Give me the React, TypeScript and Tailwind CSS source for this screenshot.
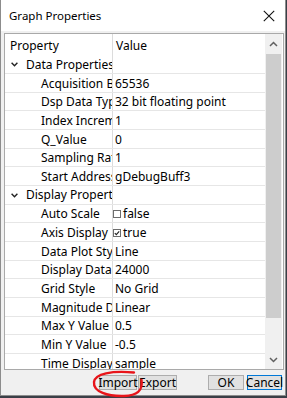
import React from "react";

type Row =
  | { kind: "cat"; name: string }
  | { kind: "prop"; name: string; value: string; check?: boolean };

const rows: Row[] = [
  { kind: "cat", name: "Data Properties" },
  { kind: "prop", name: "Acquisition Buffer Size", value: "65536" },
  { kind: "prop", name: "Dsp Data Type", value: "32 bit floating point" },
  { kind: "prop", name: "Index Increment", value: "1" },
  { kind: "prop", name: "Q_Value", value: "0" },
  { kind: "prop", name: "Sampling Rate", value: "1" },
  { kind: "prop", name: "Start Address", value: "gDebugBuff3" },
  { kind: "cat", name: "Display Properties" },
  { kind: "prop", name: "Auto Scale", value: "false", check: false },
  { kind: "prop", name: "Axis Display", value: "true", check: true },
  { kind: "prop", name: "Data Plot Style", value: "Line" },
  { kind: "prop", name: "Display Data Size", value: "24000" },
  { kind: "prop", name: "Grid Style", value: "No Grid" },
  { kind: "prop", name: "Magnitude Display", value: "Linear" },
  { kind: "prop", name: "Max Y Value", value: "0.5" },
  { kind: "prop", name: "Min Y Value", value: "-0.5" },
  { kind: "prop", name: "Time Display Unit", value: "sample" },
];

function CheckBox({ checked }: { checked: boolean }) {
  return (
    <svg width="8" height="8" viewBox="0 0 8 8" className="ml-[-2px] shrink-0">
      <rect x="0.5" y="0.5" width="7" height="7" fill="#fff" stroke="#6d6d6d" strokeWidth="1" />
      {checked && <path d="M1.8 4.2 L3.3 5.7 L6.2 2.3" fill="none" stroke="#222" strokeWidth="1.1" />}
    </svg>
  );
}

function GridRow({ row }: { row: Row }) {
  if (row.kind === "cat") {
    return (
      <div className="flex h-[18.667px] border-b border-[#e6e6e6] shrink-0">
        <div className="w-[108px] shrink-0 border-r border-[#dcdcdc] flex items-center overflow-hidden whitespace-nowrap pl-[6px] pt-[1px]">
          <svg width="7" height="5" viewBox="0 0 7 5" className="shrink-0">
            <path d="M0.6 0.8 L3.5 3.8 L6.4 0.8" fill="none" stroke="#222" strokeWidth="1.4" />
          </svg>
          <span className="ml-[8px]">{row.name}</span>
        </div>
        <div className="flex-1" />
      </div>
    );
  }
  return (
    <div className="flex h-[18.667px] border-b border-[#e6e6e6] shrink-0">
      <div className="w-[108px] shrink-0 border-r border-[#dcdcdc] flex items-center overflow-hidden whitespace-nowrap pl-[36px] pt-[2px]">
        <span>{row.name}</span>
      </div>
      <div className="flex-1 flex items-center overflow-hidden whitespace-nowrap pl-[2px] pt-[2px]">
        {row.check !== undefined && <CheckBox checked={row.check} />}
        <span className={row.check !== undefined ? "ml-[2px]" : ""}>{row.value}</span>
      </div>
    </div>
  );
}

export default function App() {
  return (
    <div
      className="w-[287px] h-[398px] bg-[#3a3f47] overflow-hidden text-[12px] text-black relative"
      style={{ fontFamily: '"Noto Sans", "Open Sans", sans-serif' }}
    >
      <div className="w-[286px] h-[396px] flex flex-col border-l border-r border-b border-[#8c8c8c] bg-[#f0f0f0]">
        {/* Title bar */}
        <div className="h-[31px] bg-white flex items-center justify-between pl-[8px] pr-[10px] shrink-0">
          <span className="text-[11.5px] leading-none pt-[1px]">Graph Properties</span>
          <svg width="12" height="12" viewBox="0 0 12 12">
            <path d="M0.8 0.8 L11.2 11.2 M11.2 0.8 L0.8 11.2" stroke="#111" strokeWidth="1.1" />
          </svg>
        </div>
        {/* Property grid */}
        <div className="mt-[2px] ml-[3px] w-[280px] h-[337px] border border-[#a9a9a9] bg-white flex overflow-hidden shrink-0">
          <div className="flex-1 flex flex-col overflow-hidden">
            <div className="flex h-[21.333px] shrink-0">
              <div className="w-[108px] shrink-0 border-r border-[#dcdcdc] pl-[5px] flex items-center pt-[3px]">
                Property
              </div>
              <div className="flex-1 pl-[3px] flex items-center pt-[3px]">Value</div>
            </div>
            {rows.map((r, i) => (
              <GridRow key={i} row={r} />
            ))}
          </div>
          {/* Scrollbar */}
          <div className="w-[17px] mr-[1px] bg-[#f0f0f0] flex flex-col shrink-0">
            <div className="h-[20px] flex items-center justify-center shrink-0">
              <svg width="9" height="6" viewBox="0 0 9 6">
                <path d="M1 5 L4.5 1.5 L8 5" fill="none" stroke="#606060" strokeWidth="1.5" />
              </svg>
            </div>
            <div className="h-[264px] mx-[1px] bg-[#cdcdcd] shrink-0" />
            <div className="flex-1" />
            <div className="h-[18px] flex items-center justify-center shrink-0">
              <svg width="9" height="6" viewBox="0 0 9 6">
                <path d="M1 1 L4.5 4.5 L8 1" fill="none" stroke="#606060" strokeWidth="1.5" />
              </svg>
            </div>
          </div>
        </div>
        {/* Footer buttons */}
        <div className="flex items-start mt-[5px] pl-[98px] shrink-0">
          <div className="w-[38px] h-[15px] bg-[#e1e1e1] border border-[#adadad] flex items-center justify-center leading-none">
            Import
          </div>
          <div className="ml-[1px] w-[39px] h-[15px] bg-[#e1e1e1] border border-[#adadad] flex items-center justify-center leading-none">
            Export
          </div>
          <div className="ml-[31px] w-[36px] h-[15px] bg-[#e1e1e1] border border-[#adadad] flex items-center justify-center leading-none">
            OK
          </div>
          <div className="ml-[3px] w-[35px] h-[15px] bg-[#e1e1e1] border border-[#0078d7] flex items-center justify-center leading-none">
            Cancel
          </div>
        </div>
      </div>
      {/* Red annotation circle */}
      <svg className="absolute left-0 top-0 pointer-events-none" width="287" height="398" viewBox="0 0 287 398">
        <path
          d="M134 372.5 C112 370.5 95 373.5 94 382 C93 392 108 396.5 124 396 C137 395.5 143 391 141.5 380"
          fill="none"
          stroke="#e8141a"
          strokeWidth="2.4"
          strokeLinecap="round"
        />
      </svg>
    </div>
  );
}
